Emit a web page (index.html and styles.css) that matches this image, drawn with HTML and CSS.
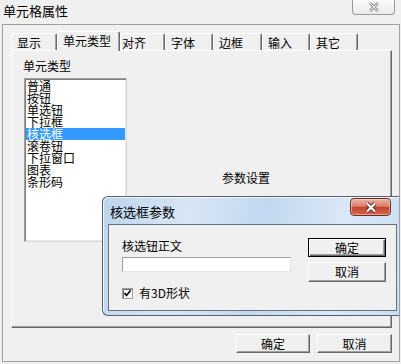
FILE: index.html
```html
<!DOCTYPE html>
<html lang="zh">
<head>
    <meta charset="UTF-8">
    <title>单元格属性</title>
    <link rel="stylesheet" href="styles.css">
</head>
<body>
    <div class="titlebar">
        <span class="title">单元格属性</span>
        <span class="close">
            <svg width="12" height="10" viewBox="0 0 12 10">
                <path d="M2 1 L10 9 M10 1 L2 9" stroke="#9a9a9a" stroke-width="3" fill="none"/>
                <path d="M2 1 L10 9 M10 1 L2 9" stroke="#f4f4f4" stroke-width="1" fill="none"/>
            </svg>
        </span>
    </div>

    <div class="frame">
        <div class="tabs">
            <div class="tab w46">显示</div>
            <div class="tab active">单元类型</div>
            <div class="tab w45 tight">对齐</div>
            <div class="tab w48">字体</div>
            <div class="tab w49">边框</div>
            <div class="tab w48">输入</div>
            <div class="tab w48">其它</div>
        </div>
        <div class="page">
            <div class="type-col">
                <div class="label">单元类型</div>
                <div class="listbox">
                    <div class="item">普通</div>
                    <div class="item">按钮</div>
                    <div class="item">单选钮</div>
                    <div class="item">下拉框</div>
                    <div class="item selected">核选框</div>
                    <div class="item">滚卷钮</div>
                    <div class="item">下拉窗口</div>
                    <div class="item">图表</div>
                    <div class="item">条形码</div>
                </div>
            </div>
            <div class="params">参数设置</div>
        </div>
        <div class="actions">
            <button class="btn w74">确定</button>
            <button class="btn w75">取消</button>
        </div>
    </div>

    <div class="dialog">
        <div class="dialog-bar">
            <span class="dialog-title">核选框参数</span>
            <span class="dialog-close">
                <svg width="14" height="11" viewBox="0 0 14 11">
                    <path d="M3 1.5 L11 9.5 M11 1.5 L3 9.5" stroke="#5a2a24" stroke-width="4" fill="none"/>
                    <path d="M3 1.5 L11 9.5 M11 1.5 L3 9.5" stroke="#fff" stroke-width="2.2" fill="none"/>
                </svg>
            </span>
        </div>
        <div class="client">
            <div class="field-col">
                <div class="label">核选钮正文</div>
                <div class="textbox"></div>
                <div class="check-row">
                    <svg class="checkbox" width="11" height="11" viewBox="0 0 11 11">
                        <rect x="0.5" y="0.5" width="10" height="10" fill="#fff" stroke="#a0a0a0"/>
                        <path d="M1.5 10 V1.5 H10" stroke="#696969" fill="none"/>
                        <path d="M2.5 5 L4.5 7.5 L8.5 2.5" stroke="#000" stroke-width="1.7" fill="none"/>
                    </svg>
                    <span>有3D形状</span>
                </div>
            </div>
            <div class="button-col">
                <button class="btn default">确定</button>
                <button class="btn tall">取消</button>
            </div>
        </div>
    </div>
</body>
</html>
```

FILE: styles.css
```css
* {
    box-sizing: border-box;
}
body {
    margin: 0;
    width: 401px;
    height: 364px;
    overflow: hidden;
    position: relative;
    background: #f0f0f0;
    color: #000;
    font-family: "Noto Sans CJK SC", sans-serif;
    font-size: 12px;
}
.titlebar {
    height: 24px;
    display: flex;
    align-items: flex-start;
}
.title {
    font-size: 13px;
    line-height: 15px;
    margin: 3px 0 0 3px;
}
.close {
    margin-left: auto;
    margin-right: 6px;
    width: 43px;
    height: 16px;
    margin-top: -1px;
    border: 1px solid #9a9a9a;
    border-top: none;
    border-radius: 0 0 4px 4px;
    background: linear-gradient(#fdfdfd, #eaeaea);
    display: flex;
    align-items: center;
    justify-content: center;
}
.frame {
    margin: 0 1px 0 2px;
    height: 338px;
    border: 1px solid #a0a0a0;
    padding: 6px 7px 0 8px;
}
.tabs {
    height: 19px;
    display: flex;
    align-items: flex-end;
}
.tab {
    height: 17px;
    line-height: 14px;
    padding: 2px 0 0 5px;
    border-top: 1px solid #fff;
    border-left: 1px solid #fff;
    border-right: 1px solid #696969;
    box-shadow: inset -1px 0 #a0a0a0;
    border-radius: 2px 2px 0 0;
}
.tab.tight {
    padding-left: 1px;
}
.tab.active {
    width: 63px;
    height: 20px;
    margin-bottom: -1px;
    padding-top: 2px;
    background: #f0f0f0;
    position: relative;
    z-index: 1;
}
.w45 { width: 45px; }
.w46 { width: 46px; }
.w48 { width: 48px; }
.w49 { width: 49px; }
.w74 { width: 74px; }
.w75 { width: 75px; }
.page {
    height: 278px;
    border: 1px solid;
    border-color: #fff #696969 #696969 #fff;
    box-shadow: inset -1px -1px #a0a0a0;
    padding: 8px 0 0 11px;
    display: flex;
}
.label {
    line-height: 14px;
}
.listbox {
    margin: 5px 0 0 1px;
    width: 103px;
    height: 164px;
    background: #fff;
    border: 1px solid;
    border-color: #a0a0a0 #d8d8d8 #d8d8d8 #a0a0a0;
    box-shadow: inset 1px 1px #808080, inset -1px -1px #e8e8e8;
    padding: 1px;
}
.item {
    height: 12px;
    line-height: 12px;
    padding-left: 1px;
}
.item.selected {
    background: #3399ff;
    color: #fff;
}
.params {
    margin: 112px 0 0 95px;
    line-height: 14px;
}
.actions {
    display: flex;
    justify-content: flex-end;
    gap: 7px;
    margin-top: 6px;
}
.btn {
    height: 19px;
    padding: 0;
    font: inherit;
    line-height: 16px;
    color: #000;
    background: #f0f0f0;
    border: 1px solid;
    border-color: #fff #696969 #696969 #fff;
    box-shadow: inset -1px -1px #a0a0a0;
}
.dialog {
    position: absolute;
    left: 102px;
    top: 196px;
    width: 297px;
    height: 120px;
    border: 1px solid #56636f;
    border-right: none;
    border-radius: 6px 0 0 6px;
    background: linear-gradient(100deg, #bcd4ee 0%, #d8e7f6 28%, #c2d8f0 52%, #dbe9f7 78%, #c9ddf3 100%);
    box-shadow: inset 1px 1px rgba(255, 255, 255, 0.7);
    padding: 0 2px 4px 5px;
    display: flex;
    flex-direction: column;
}
.dialog-bar {
    height: 27px;
    display: flex;
    align-items: flex-start;
}
.dialog-title {
    font-size: 13px;
    line-height: 15px;
    margin: 7px 0 0 2px;
}
.dialog-close {
    margin: 1px 6px 0 auto;
    width: 41px;
    height: 18px;
    border: 1px solid #6b2c24;
    border-radius: 4px;
    background: linear-gradient(#eab2a5 0%, #db806d 45%, #c5432e 52%, #d4644f 100%);
    box-shadow: inset 0 0 0 1px rgba(255, 220, 210, 0.5);
    display: flex;
    align-items: center;
    justify-content: center;
}
.client {
    flex: 1;
    border: 1px solid #66717d;
    background: #f0f0f0;
    display: flex;
    padding: 13px 10px 0 13px;
}
.field-col {
    width: 169px;
}
.field-col .label {
    margin-top: 1px;
}
.textbox {
    margin-top: 4px;
    height: 15px;
    background: #fff;
    border: 1px solid;
    border-color: #a0a0a0 #e3e3e3 #e3e3e3 #a0a0a0;
}
.check-row {
    margin-top: 14px;
    display: flex;
    align-items: center;
    gap: 6px;
    line-height: 14px;
}
.button-col {
    margin-left: auto;
    display: flex;
    flex-direction: column;
    gap: 5px;
}
.button-col .btn {
    width: 78px;
}
.btn.default {
    border-color: #000;
    box-shadow: inset 1px 1px #fff, inset -1px -1px #696969, inset -2px -2px #a0a0a0;
}
.btn.tall {
    height: 20px;
}
```
